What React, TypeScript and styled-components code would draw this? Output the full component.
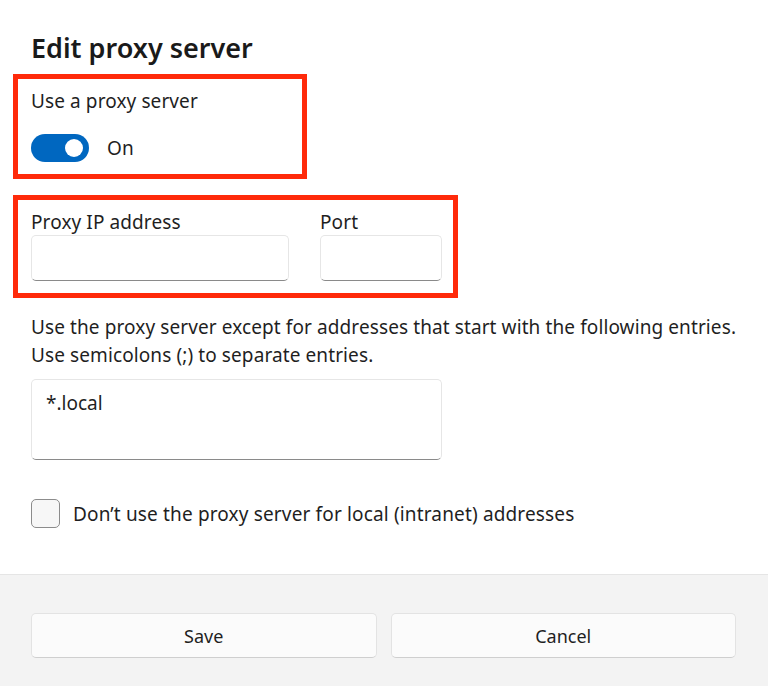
import styled, { createGlobalStyle } from 'styled-components';

const GlobalStyle = createGlobalStyle`
  html, body {
    margin: 0;
    padding: 0;
    background: #ffffff;
  }
  body {
    font-family: "Noto Sans", "Open Sans", sans-serif;
    color: #1f1f1f;
    -webkit-font-smoothing: antialiased;
  }
`;

const Dialog = styled.div`
  width: 768px;
  height: 686px;
  display: flex;
  flex-direction: column;
  background: #ffffff;
`;

const Body = styled.div`
  flex: 1;
  padding: 32px 32px 0 31px;
  display: flex;
  flex-direction: column;
  align-items: flex-start;
`;

const Title = styled.h1`
  margin: 0;
  font-size: 27px;
  line-height: 32px;
  font-weight: 600;
  color: #1a1a1a;
`;

const Highlight = styled.div<{ $width: number; $height: number; $top: number }>`
  box-sizing: border-box;
  width: ${(p) => p.$width}px;
  height: ${(p) => p.$height}px;
  margin: ${(p) => p.$top}px 0 0 -18px;
  padding: 10px 13px 0;
  border: 5px solid #ff2a0a;
`;

const Label = styled.div`
  font-size: 19px;
  line-height: 24px;
  letter-spacing: 0.1px;
  color: #1f1f1f;
`;

const ToggleRow = styled.div`
  display: flex;
  align-items: center;
  gap: 18px;
  margin-top: 21px;
`;

const Toggle = styled.div`
  box-sizing: border-box;
  width: 58px;
  height: 28px;
  border-radius: 14px;
  background: #0067c0;
  display: flex;
  align-items: center;
  justify-content: flex-end;
  padding-right: 6px;
`;

const Knob = styled.span`
  width: 18px;
  height: 18px;
  border-radius: 50%;
  background: #ffffff;
`;

const FieldRow = styled.div`
  display: flex;
  gap: 31px;
`;

const Field = styled.div`
  display: flex;
  flex-direction: column;
  gap: 1px;
`;

const Input = styled.div<{ $width: number; $height?: number }>`
  box-sizing: border-box;
  width: ${(p) => p.$width}px;
  height: ${(p) => p.$height ?? 46}px;
  background: #ffffff;
  border: 1px solid #e6e6e6;
  border-bottom: 1px solid #8a8a8a;
  border-radius: 5px;
  padding: 11px 14px;
  font-size: 19px;
  line-height: 24px;
  color: #1f1f1f;
`;

const Description = styled.p`
  margin: 15px 0 0;
  font-size: 19px;
  line-height: 28px;
  letter-spacing: 0.1px;
  white-space: nowrap;
  color: #1f1f1f;
`;

const Area = styled(Input)`
  margin-top: 10px;
`;

const CheckRow = styled.label`
  display: flex;
  align-items: center;
  gap: 13px;
  margin-top: 39px;
  font-size: 19px;
  line-height: 24px;
  letter-spacing: 0.15px;
  color: #1f1f1f;
`;

const CheckBox = styled.span`
  box-sizing: border-box;
  width: 29px;
  height: 29px;
  border: 1px solid #8c8c8c;
  border-radius: 5px;
  background: #f7f7f7;
`;

const Footer = styled.div`
  height: 112px;
  box-sizing: border-box;
  border-top: 1px solid #e5e5e5;
  background: #f3f3f3;
  padding: 38px 32px 0 31px;
  display: flex;
  gap: 14px;
`;

const Button = styled.button`
  flex: 1;
  height: 45px;
  box-sizing: border-box;
  background: #fbfbfb;
  border: 1px solid #e3e3e3;
  border-bottom-color: #cfcfcf;
  border-radius: 5px;
  font-family: inherit;
  font-size: 18px;
  color: #1f1f1f;
  cursor: pointer;
`;

export default function App() {
  return (
    <Dialog>
      <GlobalStyle />
      <Body>
        <Title>Edit proxy server</Title>
        <Highlight $width={294} $height={105} $top={10}>
          <Label>Use a proxy server</Label>
          <ToggleRow>
            <Toggle>
              <Knob />
            </Toggle>
            <Label>On</Label>
          </ToggleRow>
        </Highlight>
        <Highlight $width={445} $height={103} $top={16}>
          <FieldRow>
            <Field>
              <Label>Proxy IP address</Label>
              <Input $width={258} />
            </Field>
            <Field>
              <Label>Port</Label>
              <Input $width={122} />
            </Field>
          </FieldRow>
        </Highlight>
        <Description>
          Use the proxy server except for addresses that start with the following entries.
          <br />
          Use semicolons (;) to separate entries.
        </Description>
        <Area $width={411} $height={81}>*.local</Area>
        <CheckRow>
          <CheckBox />
          Don’t use the proxy server for local (intranet) addresses
        </CheckRow>
      </Body>
      <Footer>
        <Button>Save</Button>
        <Button>Cancel</Button>
      </Footer>
    </Dialog>
  );
}
